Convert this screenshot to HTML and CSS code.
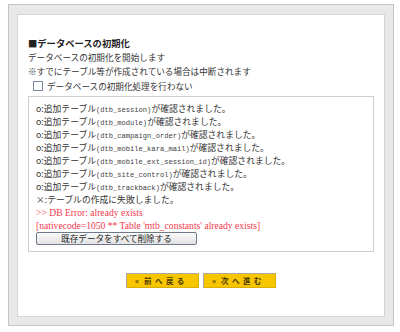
FILE: index.html
```
<!DOCTYPE html>
<html lang="ja">
<head>
    <meta charset="UTF-8">
    <title>データベースの初期化</title>
    <link rel="stylesheet" href="styles.css">
</head>
<body>
    <div class="frame">
        <div class="main">
            <h2 class="title">■データベースの初期化</h2>
            <p class="line">データベースの初期化を開始します</p>
            <p class="line">※すでにテーブル等が作成されている場合は中断されます</p>
            <label class="check">
                <span class="box"></span>データベースの初期化処理を行わない
            </label>

            <div class="log">
                <p>o:追加テーブル<span class="tbl">(dtb_session)</span>が確認されました。</p>
                <p>o:追加テーブル<span class="tbl">(dtb_module)</span>が確認されました。</p>
                <p>o:追加テーブル<span class="tbl">(dtb_campaign_order)</span>が確認されました。</p>
                <p>o:追加テーブル<span class="tbl">(dtb_mobile_kara_mail)</span>が確認されました。</p>
                <p>o:追加テーブル<span class="tbl">(dtb_mobile_ext_session_id)</span>が確認されました。</p>
                <p>o:追加テーブル<span class="tbl">(dtb_site_control)</span>が確認されました。</p>
                <p>o:追加テーブル<span class="tbl">(dtb_trackback)</span>が確認されました。</p>
                <p>×:テーブルの作成に失敗しました。</p>
                <p class="err">&gt;&gt; DB Error: already exists</p>
                <p class="err">[nativecode=1050 ** Table 'mtb_constants' already exists]</p>
                <button class="del">既存データをすべて削除する</button>
            </div>

            <div class="nav">
                <a class="nav-btn">«&nbsp;&nbsp;&nbsp;前&nbsp;&nbsp;へ&nbsp;&nbsp;戻&nbsp;&nbsp;る</a>
                <a class="nav-btn">»&nbsp;&nbsp;&nbsp;次&nbsp;&nbsp;へ&nbsp;&nbsp;進&nbsp;&nbsp;む</a>
            </div>
        </div>
    </div>
</body>
</html>
```

FILE: styles.css
```
body {
    margin: 0;
    background: #ffffff;
    font-family: "Noto Sans CJK JP", sans-serif;
    color: #333333;
}

/* 外枠 */
.frame {
    box-sizing: border-box;
    margin: 4px 0 0 8px;
    width: 386px;
    height: 322px;
    padding: 9px 8px 8px 8px;
    background: #e8e8e8;
    border: 1px solid #c4c4c4;
}

.main {
    box-sizing: border-box;
    height: 100%;
    background: #ffffff;
    border: 1px solid #d6d6d6;
    padding: 21px 10px 0 10px;
}

.title {
    margin: 0;
    font-size: 9.3px;
    line-height: 14px;
    font-weight: bold;
    color: #222222;
}

.line {
    margin: 0;
    font-size: 8.6px;
    line-height: 14px;
}

.check {
    display: flex;
    align-items: center;
    height: 16px;
    font-size: 8.6px;
}

.check .box {
    box-sizing: border-box;
    width: 10px;
    height: 10px;
    margin: 0 4px 0 5px;
    border: 1px solid #7a8aa5;
    background: #ffffff;
}

/* ログ */
.log {
    box-sizing: border-box;
    width: 346px;
    height: 156px;
    margin-top: 2px;
    padding: 5px 7px 0 7px;
    border: 1px solid #cfcfcf;
}

.log p {
    margin: 0;
    height: 13px;
    font-size: 8.8px;
    line-height: 13px;
    white-space: nowrap;
}

.log .tbl {
    font-family: "Liberation Mono", monospace;
    font-size: 7.1px;
    line-height: 1;
    color: #444444;
}

.log .err {
    font-family: "Liberation Serif", serif;
    font-size: 9.6px;
    color: #f23a4e;
}

.del {
    display: block;
    box-sizing: border-box;
    width: 161px;
    height: 13px;
    margin-top: 0;
    padding: 0;
    font-family: "Noto Sans CJK JP", sans-serif;
    font-size: 8.6px;
    line-height: 11px;
    color: #222222;
    background: linear-gradient(#fbfbfb, #e2e2e2);
    border: 1px solid #6f7a88;
    border-radius: 2px;
}

/* ナビボタン */
.nav {
    display: flex;
    justify-content: center;
    gap: 4px;
    margin-top: 21px;
}

.nav-btn {
    box-sizing: border-box;
    width: 73px;
    height: 15px;
    padding-left: 8px;
    font-size: 7.5px;
    line-height: 13px;
    font-weight: bold;
    color: #4a3a00;
    background: #f7c600;
    border-top: 1px solid #a8a8a8;
    border-left: 1px solid #a8a8a8;
    border-right: 1px solid #d8b000;
    border-bottom: 1px solid #d8b000;
}
```
